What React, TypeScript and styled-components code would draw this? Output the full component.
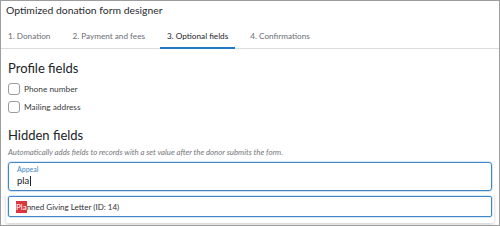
import React from 'react';
import styled, { createGlobalStyle } from 'styled-components';

const GlobalStyle = createGlobalStyle`
  html, body {
    margin: 0;
    padding: 0;
    background: #ffffff;
  }
  * {
    box-sizing: border-box;
  }
`;

const Frame = styled.div`
  width: 500px;
  height: 226px;
  border: 1px solid #9d9d9d;
  background: #ffffff;
  font-family: Lato, 'Open Sans', sans-serif;
  color: #212327;
  overflow: hidden;
`;

const Title = styled.div`
  font-size: 10.4px;
  line-height: 14px;
  padding: 2px 0 0 5px;
  color: #282a2e;
`;

const TabBar = styled.div`
  display: flex;
  margin-top: 10px;
  border-bottom: 1px solid #dcdcdc;
`;

const Tab = styled.div<{ $active?: boolean }>`
  font-size: 8.2px;
  line-height: 12px;
  padding: 3px 7px 5px;
  margin-right: 8px;
  color: ${(p) => (p.$active ? '#212327' : '#6b6e74')};
  border-bottom: 2px solid ${(p) => (p.$active ? '#1e78c2' : 'transparent')};
  margin-bottom: -1px;
`;

const Body = styled.div`
  padding: 10px 7px 0 7px;
`;

const Heading = styled.div`
  font-size: 13px;
  line-height: 18px;
  color: #212327;
`;

const CheckRow = styled.label`
  display: flex;
  align-items: center;
  gap: 4px;
  height: 18px;
  font-size: 8.3px;
  color: #3a3c40;
`;

const Box = styled.span`
  width: 12px;
  height: 12px;
  border: 1px solid #9a9ca0;
  border-radius: 3px;
  background: #fff;
`;

const CheckList = styled.div`
  display: flex;
  flex-direction: column;
  margin-top: 3px;
  margin-bottom: 10px;
`;

const Help = styled.div`
  font-size: 7.8px;
  font-style: italic;
  color: #74777c;
  line-height: 10px;
  margin-top: 3px;
`;

const Field = styled.div`
  margin-top: 5px;
  height: 29px;
  border: 1px solid #3f87c6;
  border-radius: 3px;
  padding: 2px 8px 0;
  box-shadow: 0 0 0 0.5px rgba(63, 135, 198, 0.4);
`;

const FieldLabel = styled.div`
  font-size: 7px;
  line-height: 9px;
  color: #3f87c6;
`;

const FieldValue = styled.div`
  font-size: 9.5px;
  line-height: 13px;
  color: #212327;
  display: flex;
  align-items: center;
`;

const Caret = styled.span`
  display: inline-block;
  width: 1px;
  height: 10px;
  background: #212327;
  margin-left: 0.5px;
`;

const Menu = styled.div`
  margin: 1px -2px 0;
  padding: 4px 2px 6px;
  background: #fff;
  box-shadow: 0 2px 4px rgba(0, 0, 0, 0.18);
  border-radius: 2px;
`;

const Option = styled.div`
  height: 21px;
  border: 1px solid #3f87c6;
  border-radius: 2px;
  box-shadow: 0 0 0 0.5px rgba(63, 135, 198, 0.4);
  display: flex;
  align-items: center;
  padding-left: 7px;
  font-size: 8px;
  color: #303236;
`;

const Match = styled.span`
  background: #d9363e;
  color: #ffffff;
  padding: 1px 0;
`;

const tabs = ['1. Donation', '2. Payment and fees', '3. Optional fields', '4. Confirmations'];

const App = () => {
  return (
    <>
      <GlobalStyle />
      <Frame>
        <Title>Optimized donation form designer</Title>
        <TabBar>
          {tabs.map((t, i) => (
            <Tab key={t} $active={i === 2}>
              {t}
            </Tab>
          ))}
        </TabBar>
        <Body>
          <Heading>Profile fields</Heading>
          <CheckList>
            <CheckRow>
              <Box />
              Phone number
            </CheckRow>
            <CheckRow>
              <Box />
              Mailing address
            </CheckRow>
          </CheckList>
          <Heading>Hidden fields</Heading>
          <Help>Automatically adds fields to records with a set value after the donor submits the form.</Help>
          <Field>
            <FieldLabel>Appeal</FieldLabel>
            <FieldValue>
              pla
              <Caret />
            </FieldValue>
          </Field>
          <Menu>
            <Option>
              <Match>Pla</Match>nned Giving Letter (ID: 14)
            </Option>
          </Menu>
        </Body>
      </Frame>
    </>
  );
};

export default App;
